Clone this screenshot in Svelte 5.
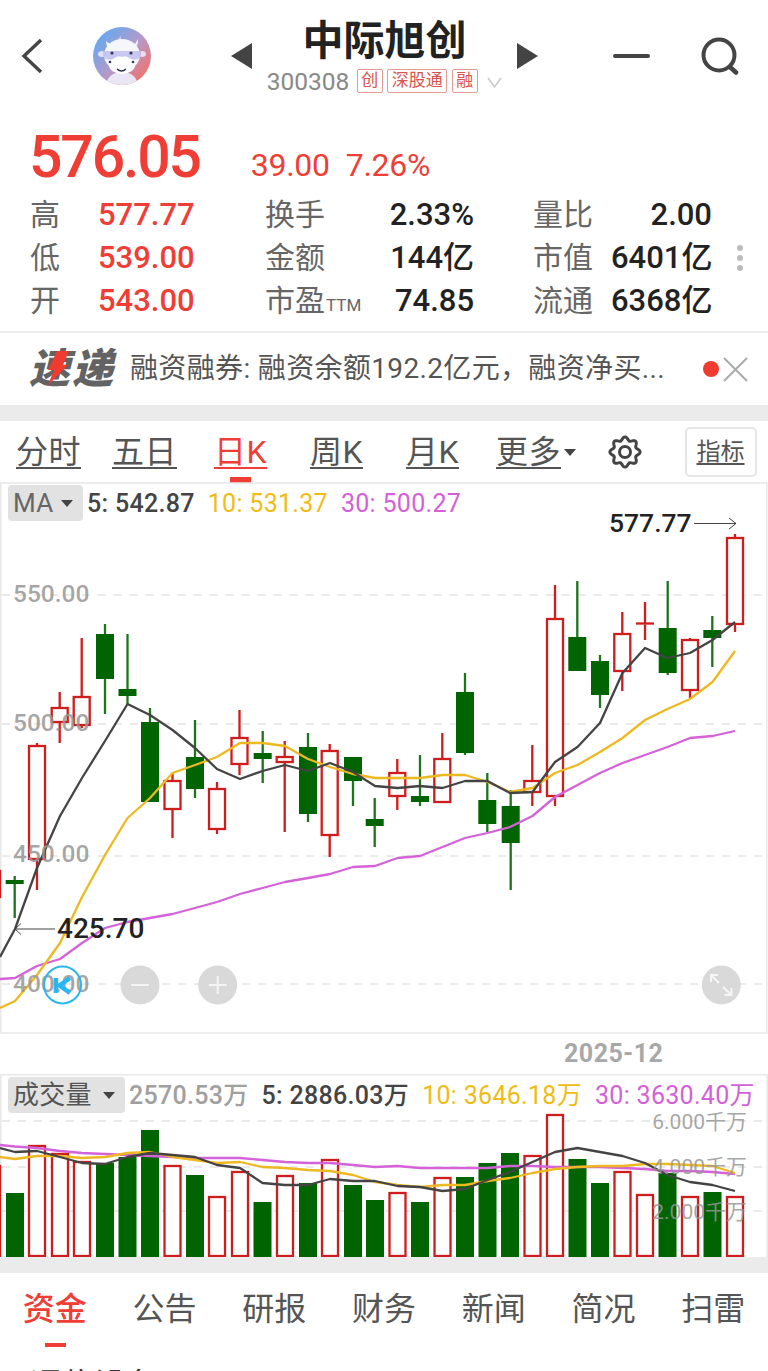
<script>
  const xs = [0,15,37,60,82,105,127.5,150,172.5,195,217,240,262.5,285,308,330,353,375,397.5,420,442.5,465,487.5,510,532.5,555,577.5,600,622.5,645,667.5,690,712.5,735];

  // x, high, body top, body bottom, low, up
  const candles = [
    [-8,871,871,897,897,1],[14.7,876,880,884,918,0],[37,743,746,859,890,1],[59.7,692,708,722,743,1],
    [81.7,638,697,725,728,1],[105,624,634,679,714,0],[127.5,634,689,696,704,0],[150,708,722,802,802,0],
    [172.5,773,781,809,838,1],[195,720,757,789,798,0],[217,782,789,829,834,1],[239.5,710,738,764,775,1],
    [262.7,731,753,759,783,0],[284.7,741,757,762,832,1],[308,733,747,814,822,0],[329.7,744,751,835,857,1],
    [353,757,757,781,806,0],[374.7,798,819,826,847,0],[397.3,759,773,796,810,1],[420,755,796,802,806,0],
    [442.3,733,759,802,802,1],[465,673,692,753,755,0],[487.3,773,800,824,832,0],[510.7,790,806,843,890,0],
    [532.3,745,781,792,806,1],[555,585,619,796,806,1],[577.3,581,637,671,671,0],[600,655,661,695,708,0],
    [622.3,612,634,671,691,1],[645,602,623.5,624.5,640,1],[667.7,581,628,673,675,0],[690,638,640,690,698,1],
    [712.3,616,630,638,667,0],[735,534,538,624,632,1]
  ];
  const ma5 = [957,929,868,816,778,741,704,715,730,748,769,779,771,765,771,763,772,786,788,786,788,781,781,793,792,762,747,723,673,648,658,653,640,622];
  const ma10 = [1008,1001,975,943,897,855,818,798,773,765,757,743,743,746,759,767,774,778,778,778,775,775,782,792,788,773,765,752,738,720,709,699,682,651];
  const ma30 = [979,978,966,959,943,928,922,918,914,908,902,894,888,882,878,874,867,866,858,856,847,838,833,827,816,797,785,773,763,755,747,738,736,731];

  const volumes = [
    [-8,1166,1],[15,1193,0],[37,1146,1],[60,1154,1],[82,1162,1],[105,1163,0],[127.5,1157,0],[150,1130,0],
    [172.5,1166,1],[195,1175,0],[217,1197,1],[240,1172,1],[262.5,1202,0],[285,1176,1],[308,1183,0],[330,1160,1],
    [353,1185,0],[375,1200,0],[397.5,1193,1],[420,1202,0],[442.5,1178,1],[465,1177,0],[487.5,1163,0],[510,1153,0],
    [532.5,1156,1],[555,1115,1],[577.5,1159,0],[600,1183,0],[622.5,1172,1],[645,1195,1],[667.5,1173,0],[690,1197,1],
    [712.5,1192,0],[735,1197,1]
  ];
  const vol5 = [1148,1152,1151,1157,1163,1164,1157,1153,1155,1157,1165,1168,1183,1185,1185,1179,1181,1181,1186,1187,1191,1189,1180,1172,1162,1152,1148,1152,1156,1163,1175,1182,1185,1191];
  const vol10 = [1157,1159,1156,1156,1158,1157,1153,1152,1157,1160,1163,1162,1167,1168,1170,1171,1175,1182,1185,1187,1185,1185,1181,1178,1173,1169,1167,1166,1166,1164,1164,1165,1166,1173];
  const vol30 = [1145,1146.5,1148,1151,1153,1154,1155,1156,1157,1158,1158,1158,1160,1162,1163,1163,1165,1167,1166,1168,1168,1168,1168,1166,1166,1167,1167,1167,1168,1169,1171,1171,1172,1174];

  const line = (ys) => ys.map((y, i) => `${xs[i]},${y}`).join(" ");

  const gear = () => {
    const pts = [];
    for (let i = 0; i < 96; i++) {
      const a = (i / 96) * Math.PI * 2 + Math.PI / 8;
      const r = 13.4 + 1.7 * Math.cos(8 * a);
      pts.push(`${(17 + r * Math.cos(a)).toFixed(2)},${(17 + r * Math.sin(a)).toFixed(2)}`);
    }
    return "M" + pts.join("L") + "Z";
  };

  const tabs = ["分时", "五日", "日K", "周K", "月K"];
  const bottomTabs = ["资金", "公告", "研报", "财务", "新闻", "简况", "扫雷"];
</script>

<div class="page">
  <header class="top">
    <svg class="back" width="24" height="36" viewBox="0 0 24 36"><path d="M21 2 L4 18 L21 34" fill="none" stroke="#444" stroke-width="3.4" /></svg>
    <svg class="avatar" width="58" height="58" viewBox="0 0 58 58">
      <defs>
        <linearGradient id="ava" x1="0.1" y1="0.1" x2="0.9" y2="0.85">
          <stop offset="0" stop-color="#62a9f2" />
          <stop offset="0.55" stop-color="#b59ac8" />
          <stop offset="1" stop-color="#f0736f" />
        </linearGradient>
        <clipPath id="avaClip"><circle cx="29" cy="29" r="29" /></clipPath>
      </defs>
      <circle cx="29" cy="29" r="29" fill="url(#ava)" />
      <g clip-path="url(#avaClip)">
        <path d="M13 14 Q13 22 20 23 L17 17 Z M45 12 Q46 21 38 23 L42 17 Z" fill="#eef0fb" />
        <path d="M28 9 Q27 13 31 17 L26 17 Q24 12 28 9 Z" fill="#dfe2f6" opacity="0.8" />
        <ellipse cx="29" cy="56" rx="15" ry="11" fill="#e9e6f5" />
        <ellipse cx="29" cy="28" rx="18" ry="16" fill="#f6f6fd" />
        <ellipse cx="29" cy="38" rx="13" ry="9" fill="#ffffff" />
        <ellipse cx="9" cy="27" rx="4" ry="3" fill="#dfe2f6" />
        <ellipse cx="49" cy="27" rx="4" ry="3" fill="#f1dce8" />
        <path d="M10 24 H48 V28 Q46 34 38 32 Q33 28 29 30 Q25 28 20 32 Q12 34 10 28 Z" fill="#b6b8ee" opacity="0.75" />
        <circle cx="19" cy="26" r="1.6" fill="#35385e" />
        <circle cx="38" cy="26" r="1.6" fill="#35385e" />
        <circle cx="17" cy="35" r="1.3" fill="#35385e" />
        <circle cx="40" cy="35" r="1.3" fill="#35385e" />
        <path d="M24 42 Q28.500 46 33 42" fill="none" stroke="#2e3050" stroke-width="1.3" />
      </g>
    </svg>
    <svg class="prev" width="21" height="26" viewBox="0 0 21 26"><path d="M21 0 V26 L0 13 Z" fill="#444" /></svg>
    <div class="name">
      <h1>中际旭创</h1>
      <div class="code">
        <span class="num">300308</span>
        <span class="tag">创</span>
        <span class="tag">深股通</span>
        <span class="tag">融</span>
        <svg class="more" width="15" height="11" viewBox="0 0 15 11"><path d="M1 1 L7.500 10 L14 1" fill="none" stroke="#c9c9c9" stroke-width="1.500" /></svg>
      </div>
    </div>
    <svg class="next" width="21" height="26" viewBox="0 0 21 26"><path d="M0 0 V26 L21 13 Z" fill="#444" /></svg>
    <div class="minus"></div>
    <svg class="search" width="38" height="38" viewBox="0 0 38 38">
      <circle cx="18" cy="18" r="15.500" fill="none" stroke="#444" stroke-width="4" />
      <path d="M29 30 L35 35.500" stroke="#444" stroke-width="4.500" stroke-linecap="round" />
    </svg>
  </header>

  <section class="quote">
    <div class="price">
      <span class="now">576.05</span>
      <span class="chg">39.00</span>
      <span class="chg">7.26%</span>
    </div>
    <div class="stats">
      <span class="lab">高</span><span class="red">577.77</span>
      <span class="lab">换手</span><span class="val">2.33%</span>
      <span class="lab last">量比</span><span class="val">2.00</span>
      <span class="lab">低</span><span class="red">539.00</span>
      <span class="lab">金额</span><span class="val">144亿</span>
      <span class="lab last">市值</span><span class="val">6401亿</span>
      <span class="lab">开</span><span class="red">543.00</span>
      <span class="lab">市盈<small>TTM</small></span><span class="val">74.85</span>
      <span class="lab last">流通</span><span class="val">6368亿</span>
      <div class="dots"><i></i><i></i><i></i></div>
    </div>
  </section>

  <section class="news">
    <div class="logo">
      <span>速递</span>
      <svg width="22" height="34" viewBox="0 0 22 34"><path d="M10 0 H22 L16 14 H21 L1 34 L7 19 H1 Z" fill="#ef3b30" /></svg>
    </div>
    <p>融资融券: 融资余额192.2亿元，融资净买...</p>
    <i class="dot"></i>
    <svg class="close" width="25" height="25" viewBox="0 0 25 25"><path d="M1 1 L24 24 M24 1 L1 24" stroke="#aaa" stroke-width="2" /></svg>
  </section>

  <div class="band"></div>

  <nav class="periods">
    {#each tabs as t, i}
      <span class="period" class:on={i === 2}>{t}</span>
    {/each}
    <span class="period morep">更多<b></b></span>
    <svg class="gear" width="34" height="34" viewBox="0 0 34 34">
      <path d={gear()} fill="none" stroke="#444" stroke-width="3" stroke-linejoin="round" />
      <circle cx="17" cy="17" r="5.500" fill="none" stroke="#444" stroke-width="3" />
    </svg>
    <span class="ind"><u>指标</u></span>
  </nav>

  <section class="kchart">
    <svg width="768" height="552" viewBox="0 482 768 552">
      <rect x="0.750" y="483" width="766" height="550" fill="none" stroke="#e8e8e8" stroke-width="1.500" />
      {#each [595, 724, 856, 984] as y}
        <line x1="2" x2="762" y1={y} y2={y} class="grid" />
      {/each}
      {#each candles as [x, hi, top, bot, lo, up]}
        {#if up}
          <path d="M{x} {hi} V{top} M{x} {bot} V{lo}" class="wick-up" />
          {#if bot - top < 3}
            <line x1={x - 9} x2={x + 9} y1={top} y2={top} class="wick-up" />
          {:else}
            <rect x={x - 8} y={top} width="16" height={bot - top} class="hollow" />
          {/if}
        {:else}
          <line x1={x} x2={x} y1={hi} y2={lo} stroke="#1c741c" stroke-width="2.300" />
          <rect x={x - 9} y={top} width="18" height={bot - top} fill="#006400" />
        {/if}
      {/each}
      <polyline points={line(ma30)} class="ln" stroke="#d462d8" />
      <polyline points={line(ma10)} class="ln" stroke="#eeb820" />
      <polyline points={line(ma5)} class="ln" stroke="#444" />

      <text x="13" y="602" class="axis">550.00</text>
      <text x="13" y="731" class="axis">500.00</text>
      <text x="13" y="862" class="axis">450.00</text>
      <text x="13" y="992" class="axis">400.00</text>

      <text x="609" y="532" class="mark">577.77</text>
      <path d="M694 523.500 H736 M729 518 L736 523.500 L729 529" fill="none" stroke="#444" stroke-width="1" />
      <text x="57" y="938" class="mark big">425.70</text>
      <path d="M55 929 H15 M21 923.500 L15 929 L21 934.500" fill="none" stroke="#444" stroke-width="1" />

      <circle cx="62.500" cy="985" r="18.500" fill="none" stroke="#29b6f2" stroke-width="2" />
      <path d="M56 978 V993 M70 978 L59.500 985.500 L70 993" fill="none" stroke="#29b6f2" stroke-width="4.500" />
      <circle cx="140" cy="985" r="19.500" fill="#d9d9d9" />
      <line x1="131" x2="149" y1="985" y2="985" stroke="#f4f4f4" stroke-width="2" />
      <circle cx="217.700" cy="985" r="19.500" fill="#d9d9d9" />
      <path d="M208.700 985 H226.700 M217.700 976 V994" stroke="#f4f4f4" stroke-width="2" />
      <circle cx="721.300" cy="985" r="19.500" fill="#d9d9d9" />
      <path d="M711 982 V975 H718 M711 975 L719 983 M731.500 988 V995 H724.500 M731.500 995 L723 987" fill="none" stroke="#f6f6f6" stroke-width="2" />
    </svg>
    <div class="legend">
      <span class="chip ma">MA<b></b></span>
      <span class="s5">5: 542.87</span>
      <span class="s10">10: 531.37</span>
      <span class="s30">30: 500.27</span>
    </div>
  </section>

  <div class="date">2025-12</div>

  <section class="vchart">
    <svg width="768" height="183" viewBox="0 1074 768 183">
      <path d="M0.750 1257 V1074.750 H767.250 V1257" fill="none" stroke="#e8e8e8" stroke-width="1.500" />
      {#each [1121, 1167, 1211] as y}
        <line x1="2" x2="762" y1={y} y2={y} class="grid" />
      {/each}
      {#each volumes as [x, top, up]}
        {#if up}
          <rect x={x - 8} y={top} width="16" height={1256 - top} class="hollow" />
        {:else}
          <rect x={x - 9} y={top} width="18" height={1257 - top} fill="#006400" />
        {/if}
      {/each}
      <polyline points={line(vol30)} class="ln" stroke="#d462d8" />
      <polyline points={line(vol10)} class="ln" stroke="#eeb820" />
      <polyline points={line(vol5)} class="ln" stroke="#444" />
      <text x="747" y="1129" class="unit">6.000千万</text>
      <text x="747" y="1174" class="unit">4.000千万</text>
      <text x="747" y="1219" class="unit">2.000千万</text>
    </svg>
    <div class="legend">
      <span class="chip vol">成交量<b></b></span>
      <span class="cur">2570.53万</span>
      <span class="s5">5: 2886.03万</span>
      <span class="s10">10: 3646.18万</span>
      <span class="s30">30: 3630.40万</span>
    </div>
  </section>

  <div class="band"></div>

  <nav class="tabs">
    {#each bottomTabs as t, i}
      <span class:on={i === 0}>{t}</span>
    {/each}
  </nav>
  <div class="peek">通信设备</div>
</div>

<style>
  :global(body) {
    margin: 0;
    background: #fff;
  }
  .page {
    width: 768px;
    height: 1371px;
    overflow: hidden;
    position: relative;
    background: #fff;
    font-family: Roboto, "Noto Sans CJK SC", sans-serif;
    color: #222;
  }
  svg {
    display: block;
    flex: none;
  }

  .top {
    height: 112px;
    display: flex;
    align-items: center;
  }
  .back {
    margin-left: 20px;
  }
  .avatar {
    margin-left: 49px;
  }
  .prev {
    margin-left: 80px;
  }
  .name {
    width: 265px;
    display: flex;
    flex-direction: column;
    align-items: center;
  }
  h1 {
    margin: 0;
    font-size: 41px;
    line-height: 50px;
    font-weight: 700;
    color: #222;
  }
  .code {
    height: 30px;
    display: flex;
    align-items: center;
    gap: 4.500px;
    color: #888;
  }
  .num {
    font-size: 24.500px;
    margin-right: 3px;
  }
  .tag {
    height: 22px;
    line-height: 21px;
    padding: 0 3.500px;
    font-size: 17px;
    color: #d8544c;
    border: 1px solid #e69a92;
    border-radius: 2px;
  }
  .more {
    margin-left: 5px;
    margin-top: 2px;
  }
  .minus {
    width: 37px;
    height: 4px;
    margin-left: 75px;
    background: #444;
    border-radius: 2px;
  }
  .search {
    margin-left: 51px;
  }

  .quote {
    height: 219px;
    padding: 13px 0 0 30px;
    box-sizing: border-box;
  }
  .price {
    height: 64px;
    display: flex;
    align-items: baseline;
    color: #ef3e35;
    line-height: 64px;
  }
  .now {
    font-size: 59px;
    font-weight: 500;
    letter-spacing: -2.200px;
    margin-left: -1px;
    margin-right: 51px;
  }
  .chg {
    font-size: 32px;
    letter-spacing: -0.300px;
    margin-right: 16px;
    position: relative;
    top: -1px;
  }
  .stats {
    margin-top: 4px;
    display: grid;
    grid-template-columns: 68px 167px 100px 109px 137px 101px 31px;
    grid-auto-rows: 43px;
    align-items: center;
    font-size: 31px;
    line-height: 43px;
    font-weight: 500;
  }
  .lab {
    font-size: 30px;
    font-weight: 400;
    color: #666;
    white-space: nowrap;
  }
  .lab small {
    font-size: 17px;
    line-height: 1;
    margin-left: 1px;
  }
  .last {
    margin-left: 59px;
  }
  .red {
    color: #ef3e35;
  }
  .val {
    text-align: right;
    color: #222;
    white-space: nowrap;
  }
  .dots {
    grid-column: 7;
    grid-row: 1 / 4;
    display: flex;
    flex-direction: column;
    gap: 4px;
    align-items: flex-end;
  }
  .dots i {
    width: 6px;
    height: 6px;
    border-radius: 50%;
    background: #bbb;
  }

  .news {
    height: 74px;
    border-top: 2px solid #eee;
    box-sizing: border-box;
    display: flex;
    align-items: center;
    padding-left: 29px;
    color: #555;
  }
  .logo {
    width: 86px;
    height: 36px;
    position: relative;
    flex: none;
  }
  .logo span {
    display: block;
    font-size: 41px;
    line-height: 36px;
    font-weight: 900;
    font-style: italic;
    color: #636363;
    letter-spacing: 2px;
  }
  .logo svg {
    position: absolute;
    left: 18px;
    top: 0;
  }
  .news p {
    margin: 0 0 0 15px;
    width: 573px;
    flex: none;
    font-size: 28px;
    line-height: 36px;
    letter-spacing: 0.350px;
    white-space: nowrap;
  }
  .dot {
    width: 16px;
    height: 16px;
    border-radius: 50%;
    background: #ef3b30;
    flex: none;
  }
  .close {
    margin-left: 4px;
  }

  .band {
    height: 16px;
    background: #ebebeb;
  }

  .periods {
    height: 61px;
    padding-left: 0.500px;
    display: grid;
    grid-template-columns: repeat(8, 96px);
    justify-items: center;
    align-items: center;
  }
  .period {
    font-size: 32px;
    line-height: 42px;
    letter-spacing: 0.500px;
    color: #555;
    text-decoration: underline;
    text-decoration-thickness: 2px;
    text-underline-offset: 4px;
    position: relative;
  }
  .period.on {
    color: #ef3e35;
  }
  .period.on::after {
    content: "";
    position: absolute;
    left: 16px;
    top: 46px;
    width: 21px;
    height: 6px;
    background: #ef3e35;
  }
  .morep b {
    position: absolute;
    left: 68px;
    top: 18px;
    border-style: solid;
    border-width: 7px 6.500px 0;
    border-color: #444 transparent transparent;
  }
  .ind {
    width: 68px;
    height: 46px;
    border: 2px solid #e6e6e6;
    border-radius: 5px;
    font-size: 24px;
    line-height: 46px;
    text-align: center;
    color: #555;
  }
  .ind u {
    text-underline-offset: 3px;
  }

  .kchart,
  .vchart {
    position: relative;
  }
  .grid {
    stroke: #e4e4e4;
    stroke-width: 1.500;
    stroke-dasharray: 8 8;
  }
  .ln {
    fill: none;
    stroke-width: 2.300;
    stroke-linejoin: round;
  }
  .wick-up {
    fill: none;
    stroke: #cf1c1c;
    stroke-width: 2.300;
  }
  .hollow {
    fill: #fff;
    stroke: #cf1c1c;
    stroke-width: 2.300;
  }
  .axis {
    font-size: 24.500px;
    font-weight: 500;
    fill: rgba(150, 150, 150, 0.85);
  }
  .mark {
    font-size: 26.500px;
    font-weight: 500;
    fill: #222;
  }
  .big {
    font-size: 28px;
  }
  .unit {
    font-size: 21px;
    text-anchor: end;
    fill: rgba(150, 150, 150, 0.85);
  }
  .legend {
    position: absolute;
    left: 8px;
    top: 3px;
    display: flex;
    align-items: center;
    gap: 13px;
    height: 36px;
    font-size: 25px;
    letter-spacing: 0.300px;
    white-space: nowrap;
  }
  .vchart .legend span:not(.chip) {
    position: relative;
    top: -2px;
  }
  .chip {
    height: 36px;
    line-height: 36px;
    background: #e2e2e2;
    border-radius: 4px;
    color: #666;
    position: relative;
    box-sizing: border-box;
    padding-left: 5px;
    margin-right: -9px;
    font-size: 26px;
  }
  .chip b {
    position: absolute;
    right: 10px;
    top: 15px;
    border-style: solid;
    border-width: 7px 6px 0;
    border-color: #444 transparent transparent;
  }
  .chip.ma {
    width: 75px;
  }
  .chip.vol {
    width: 117px;
    color: #555;
  }
  .cur {
    color: #a0a0a0;
    font-weight: 500;
  }
  .s5 {
    color: #444;
    font-weight: 500;
  }
  .s10 {
    color: #f0bc14;
  }
  .s30 {
    color: #d45fd8;
  }
  .date {
    height: 40px;
    padding-left: 564px;
    font-size: 25px;
    line-height: 40px;
    font-weight: 700;
    color: #a8a8a8;
    letter-spacing: 0.500px;
  }

  .tabs {
    height: 92px;
    display: grid;
    grid-template-columns: repeat(7, 1fr);
    justify-items: center;
  }
  .tabs span {
    font-size: 32px;
    line-height: 72px;
    color: #555;
    position: relative;
  }
  .tabs .on {
    color: #ef3e35;
    font-weight: 500;
  }
  .tabs .on::after {
    content: "";
    position: absolute;
    left: 22px;
    top: 70px;
    width: 21px;
    height: 4px;
    background: #ef3e35;
  }
  .peek {
    padding-left: 30px;
    font-size: 32px;
    line-height: 40px;
    color: #333;
  }
</style>
